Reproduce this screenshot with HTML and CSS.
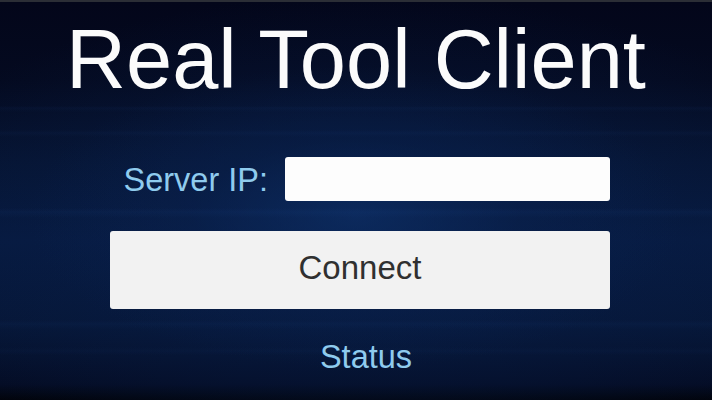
FILE: index.html
```html
<!DOCTYPE html>
<html>
<head>
<meta charset="utf-8">
<link rel="stylesheet" href="styles.css">
</head>
<body>
<div class="screen">
  <h1 class="title">Real Tool Client</h1>
  <div class="form">
    <div class="row">
      <label class="label" for="ip">Server IP:</label>
      <input class="ip" id="ip" type="text">
    </div>
    <button class="connect">Connect</button>
    <div class="status">Status</div>
  </div>
</div>
</body>
</html>
```
FILE: styles.css
```css
html, body {
  margin: 0;
  padding: 0;
  width: 712px;
  height: 400px;
  overflow: hidden;
  background: #02050f;
}
.screen {
  box-sizing: border-box;
  width: 712px;
  height: 400px;
  border-top: 2px solid #2b2e36;
  padding-top: 16px;
  font-family: "Liberation Sans", Arial, sans-serif;
  background:
    linear-gradient(to bottom,
      rgba(0,0,0,0) 0px, rgba(0,0,0,0) 104px,
      rgba(40,90,170,0.06) 106px, rgba(0,0,0,0) 110px,
      rgba(0,0,0,0) 128px, rgba(40,90,170,0.05) 131px, rgba(0,0,0,0) 135px,
      rgba(0,0,0,0) 206px, rgba(40,100,190,0.06) 210px, rgba(0,0,0,0) 216px,
      rgba(0,0,0,0) 318px, rgba(40,90,170,0.05) 322px, rgba(0,0,0,0) 327px,
      rgba(0,0,0,0) 345px, rgba(40,90,170,0.04) 349px, rgba(0,0,0,0) 353px),
    radial-gradient(ellipse 46% 38% at 50% 54%, rgba(14,50,108,0.6) 0%, rgba(10,36,84,0.35) 50%, rgba(4,12,34,0) 100%),
    radial-gradient(ellipse 72% 62% at 52% 60%, rgba(8,30,72,0.75) 0%, rgba(4,12,34,0) 100%),
    linear-gradient(to bottom, #03061a 0%, #040a20 20%, #061432 40%, #071a40 60%, #061636 82%, #040c24 96%, #01030a 100%);
}
.title {
  margin: 0;
  font-weight: normal;
  font-size: 83px;
  line-height: 83px;
  color: #fbfbfb;
  text-align: center;
}
.form {
  width: 500px;
  margin: 56px 0 0 110px;
  display: flex;
  flex-direction: column;
}
.row {
  display: flex;
  justify-content: flex-end;
  align-items: center;
  gap: 17px;
  height: 44px;
}
.label {
  font-size: 32.5px;
  line-height: 44px;
  padding-top: 2px;
  color: #8fcbee;
}
.ip {
  box-sizing: border-box;
  width: 325px;
  height: 44px;
  border: none;
  border-radius: 3px;
  background: #fdfdfd;
  margin: 0;
  padding: 0;
  outline: none;
}
.connect {
  box-sizing: border-box;
  margin-top: 30px;
  width: 500px;
  height: 78px;
  border: none;
  border-radius: 3px;
  background: #f2f2f2;
  color: #303030;
  font-family: "Liberation Sans", Arial, sans-serif;
  font-size: 33px;
  padding: 0 0 4px 0;
}
.status {
  margin-top: 28px;
  padding-left: 12px;
  text-align: center;
  font-size: 32.5px;
  line-height: 40px;
  color: #8fcbee;
}
```
